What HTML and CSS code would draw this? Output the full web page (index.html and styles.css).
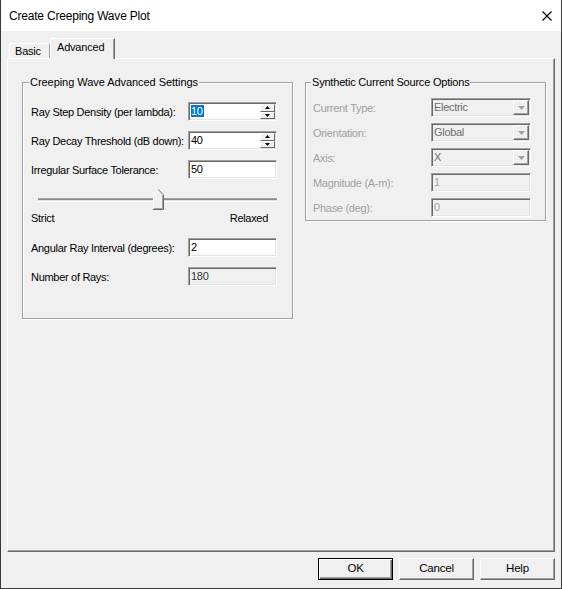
FILE: index.html
```html
<!DOCTYPE html>
<html>

<head>
    <title>Create Creeping Wave Plot</title>
    <link rel="stylesheet" href="styles.css">
</head>

<body>
    <div class="window">
        <div class="titlebar">
            <span class="title">Create Creeping Wave Plot</span>
            <svg class="close" width="10" height="10" viewBox="0 0 10 10">
                <path d="M0.5 0.5L9.5 9.5M9.5 0.5L0.5 9.5" stroke="#000" stroke-width="1.1" fill="none" />
            </svg>
        </div>

        <div class="body">
            <div class="tabs">
                <div class="tab">Basic</div>
                <div class="tab active">Advanced</div>
            </div>

            <div class="panel">
                <fieldset class="group advanced">
                    <legend>Creeping Wave Advanced Settings</legend>

                    <div class="row">
                        <span class="label">Ray Step Density (per lambda):</span>
                        <div class="field">
                            <span class="value"><span class="sel">10</span></span>
                            <div class="spin">
                                <div class="spinBtn"><svg width="5" height="3"><path d="M2.5 0L5 3H0z" fill="#000" /></svg></div>
                                <div class="spinBtn"><svg width="5" height="3"><path d="M0 0H5L2.5 3z" fill="#000" /></svg></div>
                            </div>
                        </div>
                    </div>

                    <div class="row">
                        <span class="label">Ray Decay Threshold (dB down):</span>
                        <div class="field">
                            <span class="value">40</span>
                            <div class="spin">
                                <div class="spinBtn"><svg width="5" height="3"><path d="M2.5 0L5 3H0z" fill="#000" /></svg></div>
                                <div class="spinBtn"><svg width="5" height="3"><path d="M0 0H5L2.5 3z" fill="#000" /></svg></div>
                            </div>
                        </div>
                    </div>

                    <div class="row">
                        <span class="label">Irregular Surface Tolerance:</span>
                        <div class="field"><span class="value">50</span></div>
                    </div>

                    <div class="slider">
                        <div class="track left"></div>
                        <svg class="thumb" width="11" height="21" viewBox="0 0 11 21">
                            <path d="M0 5L5 0L11 6V21H0z" fill="#f0f0f0" />
                            <path d="M0.5 20V5.2L5.2 0.5" stroke="#fff" fill="none" />
                            <path d="M5.2 0.5L10.5 5.8V20.5H0" stroke="#696969" fill="none" />
                            <path d="M9.5 6.2V19.5H1" stroke="#a0a0a0" fill="none" />
                        </svg>
                        <div class="track right"></div>
                    </div>
                    <div class="scale">
                        <span>Strict</span>
                        <span>Relaxed</span>
                    </div>

                    <div class="row angular">
                        <span class="label">Angular Ray Interval (degrees):</span>
                        <div class="field"><span class="value">2</span></div>
                    </div>

                    <div class="row">
                        <span class="label">Number of Rays:</span>
                        <div class="field readonly"><span class="value">180</span></div>
                    </div>
                </fieldset>

                <fieldset class="group source">
                    <legend>Synthetic Current Source Options</legend>

                    <div class="row">
                        <span class="label off">Current Type:</span>
                        <div class="field combo">
                            <span class="value">Electric</span>
                            <div class="drop"><svg width="7" height="4"><path d="M0 0H7L3.5 4z" fill="#a0a0a0" /></svg></div>
                        </div>
                    </div>
                    <div class="row">
                        <span class="label off">Orientation:</span>
                        <div class="field combo">
                            <span class="value">Global</span>
                            <div class="drop"><svg width="7" height="4"><path d="M0 0H7L3.5 4z" fill="#a0a0a0" /></svg></div>
                        </div>
                    </div>
                    <div class="row">
                        <span class="label off">Axis:</span>
                        <div class="field combo">
                            <span class="value">X</span>
                            <div class="drop"><svg width="7" height="4"><path d="M0 0H7L3.5 4z" fill="#a0a0a0" /></svg></div>
                        </div>
                    </div>
                    <div class="row">
                        <span class="label off">Magnitude (A-m):</span>
                        <div class="field disabled"><span class="value">1</span></div>
                    </div>
                    <div class="row">
                        <span class="label off">Phase (deg):</span>
                        <div class="field disabled"><span class="value">0</span></div>
                    </div>
                </fieldset>
            </div>

            <div class="buttons">
                <div class="button default">OK</div>
                <div class="button">Cancel</div>
                <div class="button">Help</div>
            </div>
        </div>
    </div>
</body>

</html>
```

FILE: styles.css
```css
body {
    margin: 0;
    font-family: "Liberation Sans", Arial, sans-serif;
    font-size: 11px;
    color: #000;
}

.window {
    box-sizing: border-box;
    width: 562px;
    height: 589px;
    background: #f0f0f0;
    border: 1px solid #3a3a3a;
    border-top: none;
    display: flex;
    flex-direction: column;
}

.titlebar {
    height: 31px;
    background: #fff;
    display: flex;
    align-items: center;
    justify-content: space-between;
    padding: 0 9px 0 8px;
}

.title {
    font-size: 12px;
    letter-spacing: -0.2px;
}

.body {
    padding: 8px 6px 0 6px;
}

.tabs {
    display: flex;
    align-items: flex-end;
    height: 19px;
    padding-left: 2px;
}

.tab {
    box-sizing: border-box;
    height: 15px;
    width: 41px;
    padding-left: 5px;
    line-height: 14px;
    letter-spacing: -0.2px;
    border-top: 1px solid #fff;
    border-left: 1px solid #fff;
    border-right: 1px solid #a0a0a0;
    border-top-left-radius: 2px;
}

.tab.active {
    width: 65px;
    height: 21px;
    margin-bottom: -1px;
    padding-left: 6px;
    line-height: 17px;
    border-right: 1px solid #696969;
    box-shadow: inset -1px 0 0 #a0a0a0;
    background: #f0f0f0;
    position: relative;
    z-index: 1;
}

.panel {
    box-sizing: border-box;
    height: 494px;
    border-top: 1px solid #fff;
    border-left: 1px solid #fff;
    border-right: 1px solid #696969;
    border-bottom: 1px solid #696969;
    box-shadow: inset -1px -1px 0 #a0a0a0;
    padding: 17px 0 0 14px;
    display: flex;
    align-items: flex-start;
}

.group {
    box-sizing: border-box;
    margin: 0;
    border: 1px solid #a0a0a0;
    box-shadow: inset 1px 1px 0 #fff, 1px 1px 0 #fff;
}

.group legend {
    padding: 0 1px;
    margin-left: -2px;
    line-height: 13px;
    letter-spacing: -0.05px;
    background: #f0f0f0;
}

.source legend {
    letter-spacing: -0.2px;
}

.advanced {
    width: 271px;
    height: 243px;
    padding: 13px 15px 0 8px;
}

.source {
    width: 241px;
    height: 145px;
    margin-left: 12px;
    padding: 9px 14px 0 7px;
}

.row {
    display: flex;
    align-items: center;
    height: 19px;
    margin-bottom: 10px;
}

.source .row {
    margin-bottom: 6px;
}

.label {
    width: 157px;
    letter-spacing: -0.3px;
    white-space: nowrap;
}

.source .label {
    width: 118px;
}

.label.off {
    color: #a0a0a0;
}

.field {
    box-sizing: border-box;
    width: 89px;
    height: 19px;
    padding: 1px;
    border: 1px solid;
    border-color: #a0a0a0 #fff #fff #a0a0a0;
    box-shadow: inset 1px 1px 0 #696969, inset -1px -1px 0 #e3e3e3;
    background: #fff;
    display: flex;
}

.value {
    flex: 1;
    padding-left: 1px;
    line-height: 15px;
    letter-spacing: -0.3px;
}

.sel {
    background: #0078d7;
    color: #fff;
    padding-right: 1px;
}

.spin {
    width: 15px;
    display: flex;
    flex-direction: column;
}

.spinBtn {
    flex: 1;
    box-sizing: border-box;
    background: #f0f0f0;
    border: 1px solid;
    border-color: #fff #696969 #696969 #fff;
    display: flex;
    align-items: center;
    justify-content: center;
}

.field.readonly {
    background: #f0f0f0;
    color: #333;
}

.field.disabled,
.field.combo {
    width: 100px;
    background: #f0f0f0;
}

.field.disabled {
    color: #a0a0a0;
}

.field.combo {
    color: #6d6d6d;
}

.drop {
    width: 16px;
    box-sizing: border-box;
    border: 1px solid;
    border-color: #fff #696969 #696969 #fff;
    box-shadow: inset -1px -1px 0 #a0a0a0;
    display: flex;
    align-items: center;
    justify-content: center;
}

.slider {
    display: flex;
    align-items: center;
    height: 21px;
    margin-top: 1px;
    padding-left: 7px;
}

.track {
    box-sizing: border-box;
    height: 4px;
    border-top: 1px solid #a0a0a0;
    border-bottom: 1px solid #fff;
    background: linear-gradient(#8a8a8a 50%, #e3e3e3 50%);
}

.track.left {
    width: 115px;
}

.track.right {
    width: 113px;
}

.scale {
    display: flex;
    justify-content: space-between;
    width: 237px;
    line-height: 13px;
    margin-top: 2px;
    letter-spacing: -0.3px;
}

.row.angular {
    margin-top: 13px;
}

.buttons {
    display: flex;
    justify-content: flex-end;
    gap: 6px;
    margin-top: 6px;
}

.button {
    box-sizing: border-box;
    width: 75px;
    height: 22px;
    border: 1px solid;
    border-color: #fff #696969 #696969 #fff;
    box-shadow: inset -1px -1px 0 #a0a0a0;
    text-align: center;
    line-height: 19px;
    font-size: 11.5px;
    letter-spacing: -0.2px;
}

.button.default {
    border: 1px solid #000;
    box-shadow: inset 1px 1px 0 #fff, inset -1px -1px 0 #696969, inset -2px -2px 0 #a0a0a0;
}
```
